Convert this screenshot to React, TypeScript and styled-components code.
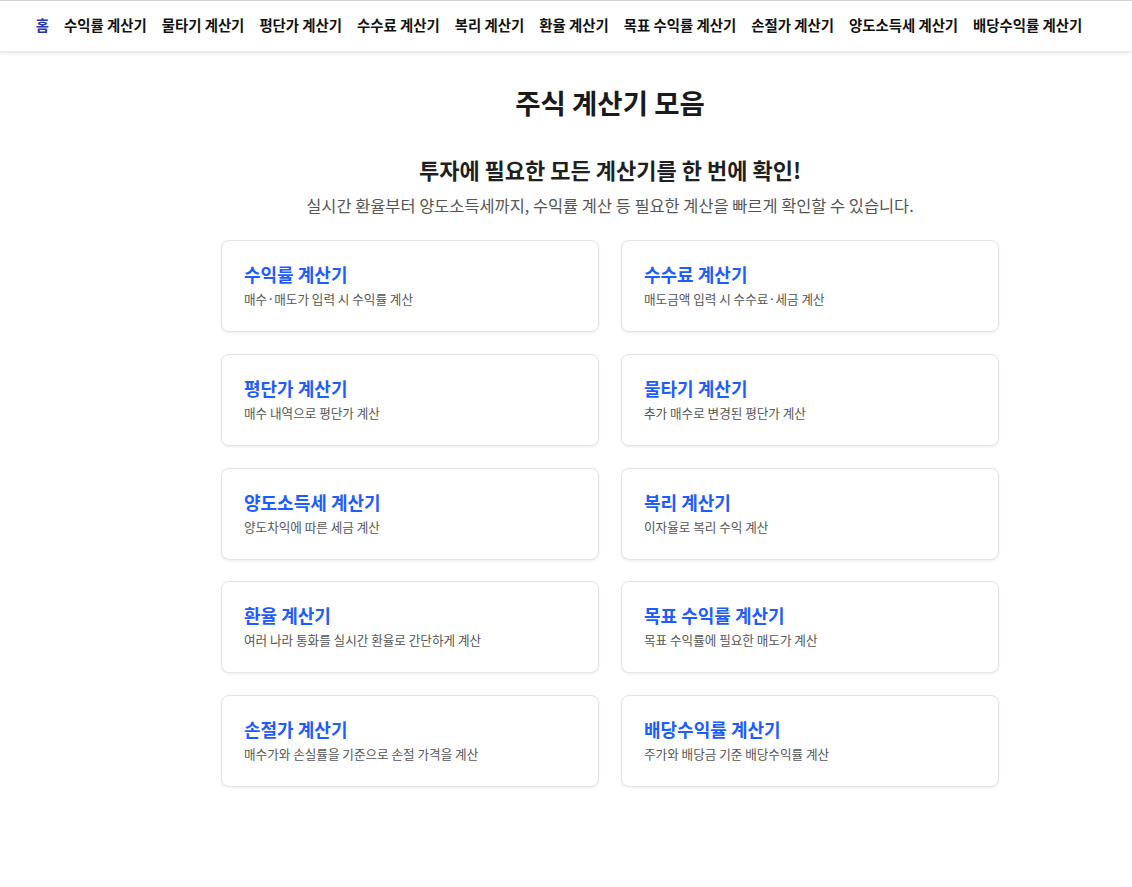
import React from "react";
import styled, { createGlobalStyle } from "styled-components";

const GlobalStyle = createGlobalStyle`
  html, body {
    margin: 0;
    padding: 0;
    background: #ffffff;
    font-family: "Noto Sans CJK KR", "Noto Sans", sans-serif;
    color: #222222;
  }
  * { box-sizing: border-box; }
`;

const Header = styled.header`
  height: 51px;
  border-top: 1px solid #d4d4d4;
  background: #ffffff;
  box-shadow: 0 2px 4px rgba(0, 0, 0, 0.12);
  display: flex;
  align-items: center;
  justify-content: center;
  padding: 0 14px 3px 0;
`;

const Nav = styled.nav`
  display: flex;
  align-items: center;
  gap: 15px;
`;

const NavLink = styled.a<{ $active?: boolean }>`
  font-size: 14.4px;
  line-height: 20px;
  font-weight: 700;
  color: ${(p) => (p.$active ? "#2736b0" : "#111111")};
  text-decoration: none;
  white-space: nowrap;
  cursor: pointer;
`;

const Main = styled.main`
  display: flex;
  flex-direction: column;
  align-items: center;
  padding: 33px 0 80px 88px;
`;

const Title = styled.h1`
  margin: 0;
  font-size: 27.5px;
  line-height: 36px;
  font-weight: 700;
  color: #1a1a1a;
`;

const SubTitle = styled.h2`
  margin: 35px 0 0;
  font-size: 22px;
  line-height: 28px;
  font-weight: 700;
  color: #1f1f1f;
`;

const Lead = styled.p`
  margin: 10px 0 0;
  font-size: 16.4px;
  line-height: 24px;
  color: #555555;
`;

const Grid = styled.div`
  margin-top: 23px;
  display: grid;
  grid-template-columns: repeat(2, 378px);
  column-gap: 22px;
  row-gap: 21.75px;
`;

const Card = styled.a`
  display: flex;
  flex-direction: column;
  border: 1px solid #e4e4e4;
  border-radius: 8px;
  background: #ffffff;
  box-shadow: 0 1px 3px rgba(0, 0, 0, 0.08);
  padding: 22px 22px 23px;
  text-decoration: none;
  cursor: pointer;
`;

const CardTitle = styled.span`
  font-size: 18px;
  line-height: 22px;
  font-weight: 700;
  color: #1d5cff;
`;

const CardDesc = styled.span`
  margin-top: 5px;
  font-size: 12.6px;
  line-height: 18px;
  color: #555555;
`;

const navItems = [
  "홈",
  "수익률 계산기",
  "물타기 계산기",
  "평단가 계산기",
  "수수료 계산기",
  "복리 계산기",
  "환율 계산기",
  "목표 수익률 계산기",
  "손절가 계산기",
  "양도소득세 계산기",
  "배당수익률 계산기",
];

const cards = [
  { title: "수익률 계산기", desc: "매수·매도가 입력 시 수익률 계산" },
  { title: "수수료 계산기", desc: "매도금액 입력 시 수수료·세금 계산" },
  { title: "평단가 계산기", desc: "매수 내역으로 평단가 계산" },
  { title: "물타기 계산기", desc: "추가 매수로 변경된 평단가 계산" },
  { title: "양도소득세 계산기", desc: "양도차익에 따른 세금 계산" },
  { title: "복리 계산기", desc: "이자율로 복리 수익 계산" },
  { title: "환율 계산기", desc: "여러 나라 통화를 실시간 환율로 간단하게 계산" },
  { title: "목표 수익률 계산기", desc: "목표 수익률에 필요한 매도가 계산" },
  { title: "손절가 계산기", desc: "매수가와 손실률을 기준으로 손절 가격을 계산" },
  { title: "배당수익률 계산기", desc: "주가와 배당금 기준 배당수익률 계산" },
];

export default function App() {
  return (
    <>
      <GlobalStyle />
      <Header>
        <Nav>
          {navItems.map((item, i) => (
            <NavLink key={item} $active={i === 0}>
              {item}
            </NavLink>
          ))}
        </Nav>
      </Header>
      <Main>
        <Title>주식 계산기 모음</Title>
        <SubTitle>투자에 필요한 모든 계산기를 한 번에 확인!</SubTitle>
        <Lead>실시간 환율부터 양도소득세까지, 수익률 계산 등 필요한 계산을 빠르게 확인할 수 있습니다.</Lead>
        <Grid>
          {cards.map((c) => (
            <Card key={c.title}>
              <CardTitle>{c.title}</CardTitle>
              <CardDesc>{c.desc}</CardDesc>
            </Card>
          ))}
        </Grid>
      </Main>
    </>
  );
}
